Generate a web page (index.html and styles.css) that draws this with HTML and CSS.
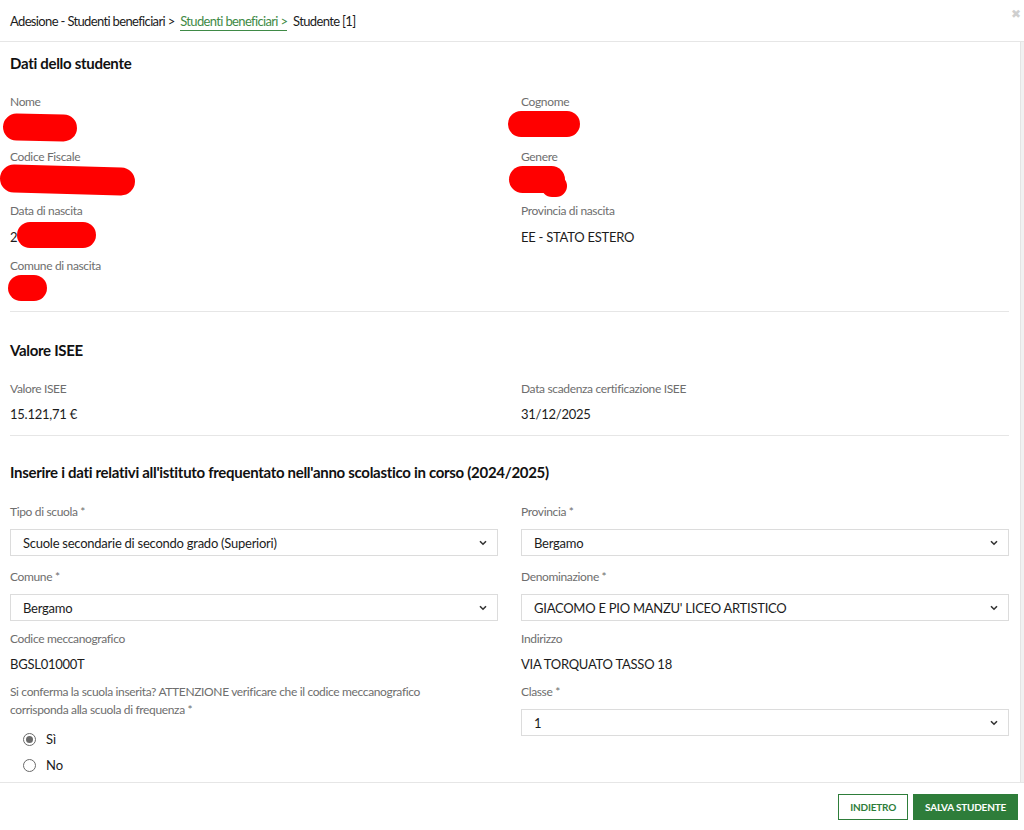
FILE: index.html
```html
<!DOCTYPE html>
<html lang="it">
<head>
    <meta charset="UTF-8">
    <meta name="viewport" content="width=device-width, initial-scale=1.0">
    <title>Studente [1]</title>
    <link rel="stylesheet" href="styles.css">
</head>
<body>

    <div class="modal">
        <div class="modal-head">
            <nav class="crumbs">
                <span>Adesione - Studenti beneficiari &gt;</span>
                <a href="#" class="crumb-link">Studenti beneficiari &gt;</a>
                <span>Studente [1]</span>
            </nav>
            <span class="close">&#10006;</span>
        </div>

        <div class="modal-body">
            <div class="content">

                <h2 class="section-title">Dati dello studente</h2>
                <div class="grid info">
                    <div class="field">
                        <label>Nome</label>
                        <div class="value">&nbsp;</div>
                        <span class="redact r-nome"></span>
                    </div>
                    <div class="field">
                        <label>Cognome</label>
                        <div class="value">&nbsp;</div>
                        <span class="redact r-cognome"></span>
                    </div>
                    <div class="field">
                        <label>Codice Fiscale</label>
                        <div class="value">&nbsp;</div>
                        <span class="redact r-cf"></span>
                    </div>
                    <div class="field">
                        <label>Genere</label>
                        <div class="value">&nbsp;</div>
                        <span class="redact r-genere"></span>
                        <span class="redact r-genere2"></span>
                    </div>
                    <div class="field">
                        <label>Data di nascita</label>
                        <div class="value">2</div>
                        <span class="redact r-data"></span>
                    </div>
                    <div class="field">
                        <label>Provincia di nascita</label>
                        <div class="value">EE - STATO ESTERO</div>
                    </div>
                    <div class="field">
                        <label>Comune di nascita</label>
                        <div class="value">&nbsp;</div>
                        <span class="redact r-comune"></span>
                    </div>
                </div>

                <hr class="sep first">

                <h2 class="section-title">Valore ISEE</h2>
                <div class="grid info isee">
                    <div class="field">
                        <label>Valore ISEE</label>
                        <div class="value">15.121,71 €</div>
                    </div>
                    <div class="field">
                        <label>Data scadenza certificazione ISEE</label>
                        <div class="value">31/12/2025</div>
                    </div>
                </div>

                <hr class="sep">

                <h2 class="section-title">Inserire i dati relativi all'istituto frequentato nell'anno scolastico in corso (2024/2025)</h2>
                <div class="grid school">
                    <div class="field sel">
                        <label>Tipo di scuola *</label>
                        <div class="select">
                            <span>Scuole secondarie di secondo grado (Superiori)</span>
                            <svg width="8" height="6" viewBox="0 0 8 6"><path d="M1 1.2 L4 4.2 L7 1.2" fill="none" stroke="#333" stroke-width="1.6"/></svg>
                        </div>
                    </div>
                    <div class="field sel">
                        <label>Provincia *</label>
                        <div class="select">
                            <span>Bergamo</span>
                            <svg width="8" height="6" viewBox="0 0 8 6"><path d="M1 1.2 L4 4.2 L7 1.2" fill="none" stroke="#333" stroke-width="1.6"/></svg>
                        </div>
                    </div>
                    <div class="field sel tight">
                        <label>Comune *</label>
                        <div class="select">
                            <span>Bergamo</span>
                            <svg width="8" height="6" viewBox="0 0 8 6"><path d="M1 1.2 L4 4.2 L7 1.2" fill="none" stroke="#333" stroke-width="1.6"/></svg>
                        </div>
                    </div>
                    <div class="field sel tight">
                        <label>Denominazione *</label>
                        <div class="select">
                            <span>GIACOMO E PIO MANZU' LICEO ARTISTICO</span>
                            <svg width="8" height="6" viewBox="0 0 8 6"><path d="M1 1.2 L4 4.2 L7 1.2" fill="none" stroke="#333" stroke-width="1.6"/></svg>
                        </div>
                    </div>
                    <div class="field code">
                        <label>Codice meccanografico</label>
                        <div class="value">BGSL01000T</div>
                    </div>
                    <div class="field code">
                        <label>Indirizzo</label>
                        <div class="value">VIA TORQUATO TASSO 18</div>
                    </div>
                    <div class="field confirm">
                        <label class="long">Si conferma la scuola inserita? ATTENZIONE verificare che il codice meccanografico corrisponda alla scuola di frequenza *</label>
                        <div class="radios">
                            <div class="radio"><span class="dot checked"></span>Sì</div>
                            <div class="radio"><span class="dot"></span>No</div>
                        </div>
                    </div>
                    <div class="field sel">
                        <label>Classe *</label>
                        <div class="select">
                            <span>1</span>
                            <svg width="8" height="6" viewBox="0 0 8 6"><path d="M1 1.2 L4 4.2 L7 1.2" fill="none" stroke="#333" stroke-width="1.6"/></svg>
                        </div>
                    </div>
                </div>

            </div>
            <div class="scroll-track"></div>
        </div>

        <div class="modal-foot">
            <button class="btn btn-outline">Indietro</button>
            <button class="btn btn-fill">Salva studente</button>
        </div>
    </div>

</body>
</html>
```

FILE: styles.css
```css
body {
    margin: 0;
    font-family: 'Lato', 'Open Sans', sans-serif;
    color: #1c1c1c;
    background: white;
}

.modal {
    height: 830px;
    display: flex;
    flex-direction: column;
    overflow: hidden;
}

.modal-head {
    height: 41px;
    flex-shrink: 0;
    border-bottom: 1px solid #e6e6e6;
    display: flex;
    justify-content: space-between;
    align-items: flex-start;
    padding: 0 3px 0 10px;
}

.crumbs {
    font-size: 13px;
    line-height: 18px;
    letter-spacing: -0.65px;
    padding-top: 12px;
    color: #1c1c1c;
}

.crumb-link {
    color: #3f8a46;
    text-decoration: none;
    border-bottom: 1px solid #3f8a46;
    padding-bottom: 1px;
    margin: 0 3px;
}

.close {
    color: #cfcfcf;
    font-size: 12px;
    padding-top: 6px;
}

.modal-body {
    flex: 1;
    display: flex;
    overflow: hidden;
}

.content {
    flex: 1;
    padding: 11px 11px 0 10px;
}

.scroll-track {
    width: 3px;
    background: #f1f1f1;
    border-left: 1px solid #e4e4e4;
}

.section-title {
    font-size: 15px;
    font-weight: bold;
    line-height: 20px;
    letter-spacing: -0.3px;
    margin: 0;
    color: #111;
}

.grid {
    display: grid;
    grid-template-columns: 1fr 1fr;
    column-gap: 23px;
}

.info {
    margin-top: 21px;
}

.field {
    display: flex;
    flex-direction: column;
    position: relative;
}

.field label {
    font-size: 12px;
    line-height: 16px;
    letter-spacing: -0.35px;
    color: #6e6e6e;
}

.info .field {
    gap: 7px;
    margin-bottom: 9.5px;
}

.info.isee .field {
    gap: 6px;
    margin-bottom: 0;
}

.value {
    font-size: 13px;
    letter-spacing: -0.25px;
    line-height: 22px;
    color: #1c1c1c;
}

.sep {
    border: none;
    border-top: 1px solid #e6e6e6;
    margin: 0 0 28px;
}

.sep.first {
    margin-top: -1px;
}

.info.isee + .sep {
    margin-top: 10px;
    margin-bottom: 26px;
}

.school {
    margin-top: 22px;
}

.field.sel {
    gap: 9px;
    margin-bottom: 13px;
}

.field.sel.tight {
    margin-bottom: 10px;
}

.field.code {
    gap: 6px;
    margin-bottom: 9px;
}

.select {
    height: 27px;
    box-sizing: border-box;
    border: 1px solid #dcdcdc;
    display: flex;
    align-items: center;
    justify-content: space-between;
    padding: 0 10px 0 12px;
    font-size: 13px;
    letter-spacing: -0.25px;
    color: #1c1c1c;
}

.field label.long {
    line-height: 18px;
    margin-top: -1px;
    max-width: 415px;
}

.radios {
    padding: 7px 0 0 13px;
}

.radio {
    display: flex;
    align-items: center;
    height: 26px;
    line-height: 26px;
    font-size: 13px;
}

.dot {
    width: 11px;
    height: 11px;
    border: 1.5px solid #6a6a6a;
    border-radius: 50%;
    margin-right: 10px;
    position: relative;
}

.dot.checked::after {
    content: "";
    position: absolute;
    left: 2px;
    top: 2px;
    width: 7px;
    height: 7px;
    border-radius: 50%;
    background: #6a6a6a;
}

/* redazioni a mano sopra i dati personali */
.redact {
    position: absolute;
    background: #ff0000;
    border-radius: 14px;
}

.r-nome { left: -7px; top: 20px; width: 74px; height: 27px; transform: rotate(1deg); }
.r-cognome { left: -13px; top: 17px; width: 72px; height: 26px; }
.r-cf { left: -10px; top: 17px; width: 135px; height: 28px; transform: rotate(1.5deg); }
.r-genere { left: -12px; top: 17px; width: 56px; height: 27px; }
.r-genere2 { left: 20px; top: 26px; width: 26px; height: 22px; }
.r-data { left: 7px; top: 19px; width: 79px; height: 26px; }
.r-comune { left: -2px; top: 17px; width: 39px; height: 26px; }

.modal-foot {
    height: 47px;
    flex-shrink: 0;
    border-top: 1px solid #e6e6e6;
    display: flex;
    justify-content: flex-end;
    align-items: center;
    gap: 5px;
    padding-right: 6px;
}

.btn {
    height: 26px;
    font-family: inherit;
    font-size: 10px;
    font-weight: bold;
    letter-spacing: -0.2px;
    text-transform: uppercase;
    border-radius: 0;
    cursor: pointer;
    padding: 0 11px;
}

.btn-outline {
    background: white;
    color: #2e7d3a;
    border: 1px solid #2e7d3a;
}

.btn-fill {
    background: #2e7d3a;
    color: white;
    border: 1px solid #2e7d3a;
}
```
